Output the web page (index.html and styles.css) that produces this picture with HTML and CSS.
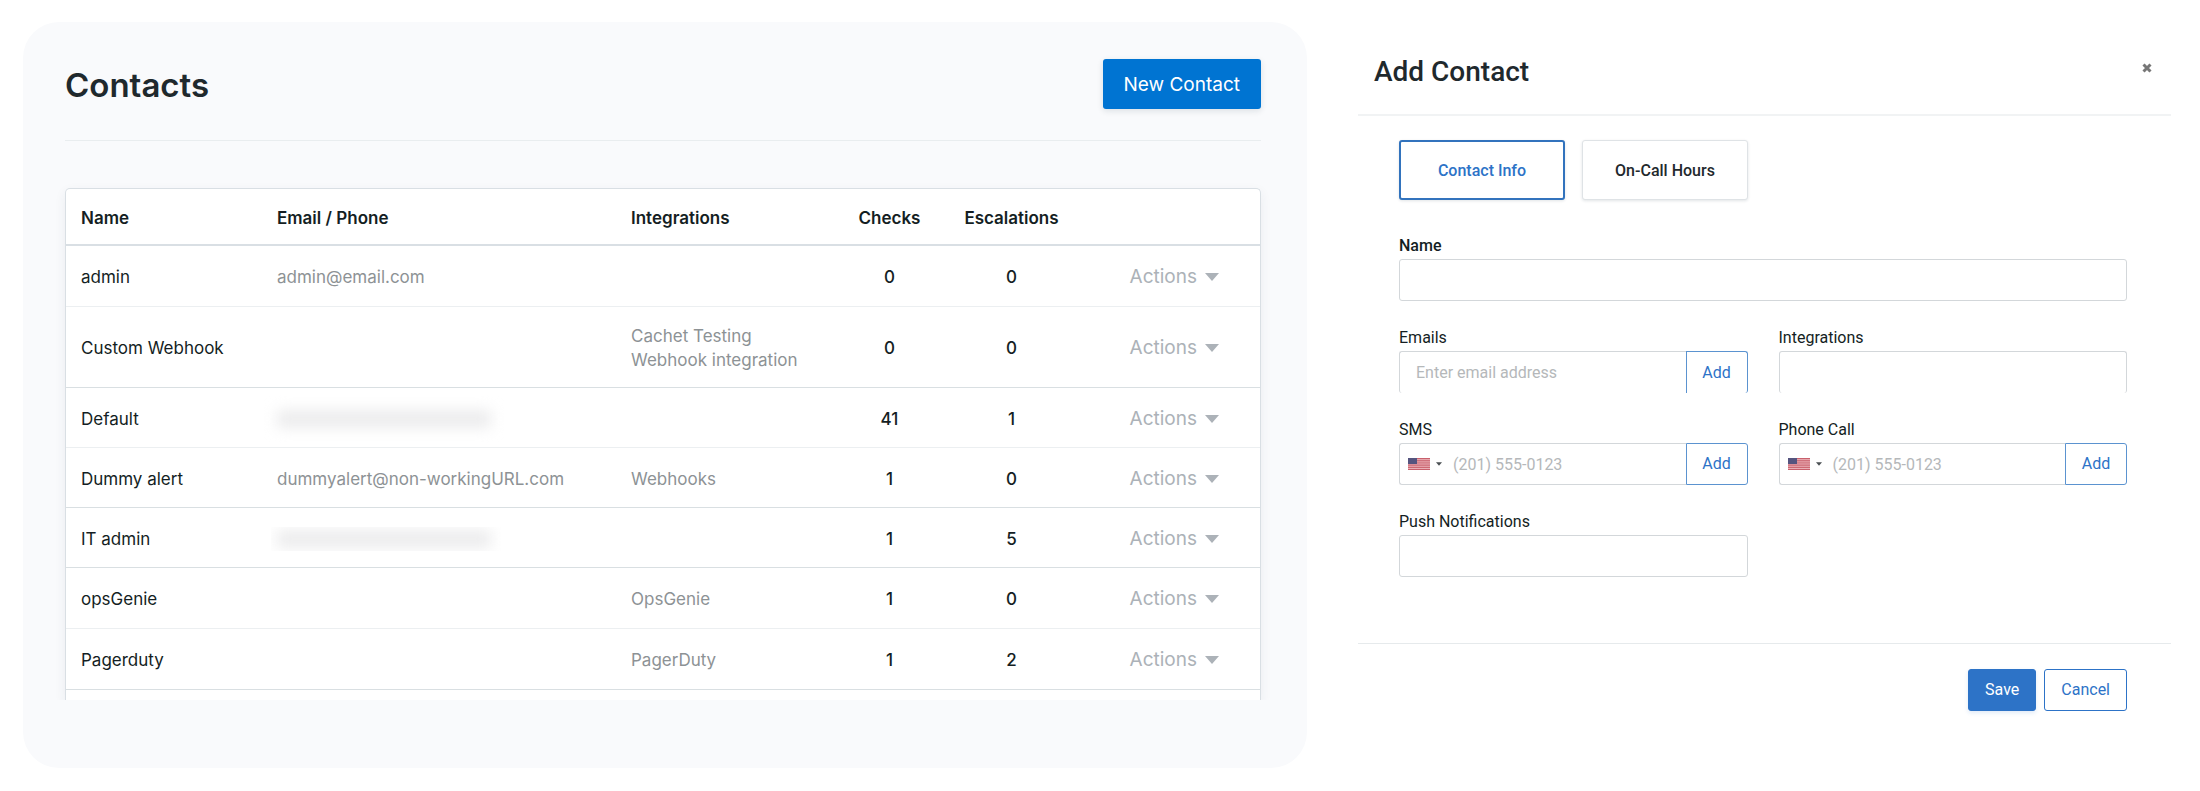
FILE: index.html
```html
<!DOCTYPE html>
<html lang="en">
<head>
    <meta charset="UTF-8">
    <meta name="viewport" content="width=device-width, initial-scale=1.0">
    <title>Contacts</title>
    <link rel="stylesheet" href="styles.css">
</head>
<body>
    <!-- Shared icons -->
    <svg class="sprite" width="0" height="0" aria-hidden="true">
        <symbol id="caret" viewBox="0 0 14 8"><path d="M0 0h14L7 8z" fill="currentColor"/></symbol>
        <symbol id="flag-us" viewBox="0 0 22 12" preserveAspectRatio="none">
            <rect width="22" height="12" fill="#eeb9bf"/>
            <path d="M0 .5h22M0 2.3h22M0 4.1h22M0 6h22M0 7.8h22M0 9.6h22M0 11.5h22" stroke="#c8606c"/>
            <rect width="9" height="6" fill="#55547f"/>
        </symbol>
    </svg>

    <div class="page">
        <section class="contacts">
            <header class="contacts-header">
                <h1>Contacts</h1>
                <button type="button" class="btn-new">New Contact</button>
            </header>

            <div class="table-clip">
                <table class="contacts-table">
                    <colgroup>
                        <col class="col-name">
                        <col class="col-email">
                        <col class="col-integrations">
                        <col class="col-checks">
                        <col class="col-escalations">
                        <col class="col-actions">
                    </colgroup>
                    <thead>
                        <tr>
                            <th>Name</th>
                            <th>Email / Phone</th>
                            <th>Integrations</th>
                            <th class="num">Checks</th>
                            <th class="num">Escalations</th>
                            <td></td>
                        </tr>
                    </thead>
                    <tbody>
                        <tr class="light">
                            <td>admin</td>
                            <td class="muted">admin@email.com</td>
                            <td class="muted"></td>
                            <td class="num">0</td>
                            <td class="num">0</td>
                            <td><button type="button" class="actions">Actions <svg><use href="#caret"/></svg></button></td>
                        </tr>
                        <tr class="double">
                            <td>Custom Webhook</td>
                            <td class="muted"></td>
                            <td class="muted">Cachet Testing<br>Webhook integration</td>
                            <td class="num">0</td>
                            <td class="num">0</td>
                            <td><button type="button" class="actions">Actions <svg><use href="#caret"/></svg></button></td>
                        </tr>
                        <tr class="light compact">
                            <td>Default</td>
                            <td class="muted"><div class="redacted"></div></td>
                            <td class="muted"></td>
                            <td class="num">41</td>
                            <td class="num">1</td>
                            <td><button type="button" class="actions">Actions <svg><use href="#caret"/></svg></button></td>
                        </tr>
                        <tr class="compact">
                            <td>Dummy alert</td>
                            <td class="muted">dummyalert@non-workingURL.com</td>
                            <td class="muted">Webhooks</td>
                            <td class="num">1</td>
                            <td class="num">0</td>
                            <td><button type="button" class="actions">Actions <svg><use href="#caret"/></svg></button></td>
                        </tr>
                        <tr class="compact">
                            <td>IT admin</td>
                            <td class="muted"><div class="redacted-clip"><div class="redacted"></div></div></td>
                            <td class="muted"></td>
                            <td class="num">1</td>
                            <td class="num">5</td>
                            <td><button type="button" class="actions">Actions <svg><use href="#caret"/></svg></button></td>
                        </tr>
                        <tr class="light">
                            <td>opsGenie</td>
                            <td class="muted"></td>
                            <td class="muted">OpsGenie</td>
                            <td class="num">1</td>
                            <td class="num">0</td>
                            <td><button type="button" class="actions">Actions <svg><use href="#caret"/></svg></button></td>
                        </tr>
                        <tr>
                            <td>Pagerduty</td>
                            <td class="muted"></td>
                            <td class="muted">PagerDuty</td>
                            <td class="num">1</td>
                            <td class="num">2</td>
                            <td><button type="button" class="actions">Actions <svg><use href="#caret"/></svg></button></td>
                        </tr>
                        <tr class="cut"><td colspan="6"></td></tr>
                    </tbody>
                </table>
            </div>
        </section>

        <form class="dialog">
            <header class="dialog-header">
                <h2>Add Contact</h2>
                <button type="button" class="close" aria-label="Close">
                    <svg viewBox="0 0 10 10"><path d="M1.5 1.5l7 7M8.5 1.5l-7 7" stroke="#777" stroke-width="3" fill="none"/></svg>
                </button>
            </header>

            <div class="dialog-body">
                <div class="tabs">
                    <button type="button" class="tab active">Contact Info</button>
                    <button type="button" class="tab">On-Call Hours</button>
                </div>

                <div class="fields">
                    <div class="field wide">
                        <label class="strong" for="name">Name</label>
                        <input type="text" id="name">
                    </div>
                    <div class="field open">
                        <label for="email">Emails</label>
                        <div class="group">
                            <input type="email" id="email" placeholder="Enter email address">
                            <button type="button" class="add">Add</button>
                        </div>
                    </div>
                    <div class="field open">
                        <label for="integrations">Integrations</label>
                        <input type="text" id="integrations">
                    </div>
                    <div class="field">
                        <label for="sms">SMS</label>
                        <div class="group phone">
                            <button type="button" class="country" aria-label="Country: United States">
                                <svg class="flag"><use href="#flag-us"/></svg>
                                <svg class="arrow"><use href="#caret"/></svg>
                            </button>
                            <input type="tel" id="sms" placeholder="(201) 555-0123">
                            <button type="button" class="add">Add</button>
                        </div>
                    </div>
                    <div class="field">
                        <label for="call">Phone Call</label>
                        <div class="group phone">
                            <button type="button" class="country" aria-label="Country: United States">
                                <svg class="flag"><use href="#flag-us"/></svg>
                                <svg class="arrow"><use href="#caret"/></svg>
                            </button>
                            <input type="tel" id="call" placeholder="(201) 555-0123">
                            <button type="button" class="add">Add</button>
                        </div>
                    </div>
                    <div class="field">
                        <label for="push">Push Notifications</label>
                        <input type="text" id="push">
                    </div>
                </div>
            </div>

            <footer class="dialog-footer">
                <button type="submit" class="save">Save</button>
                <button type="button" class="cancel">Cancel</button>
            </footer>
        </form>
    </div>
</body>
</html>
```
FILE: styles.css
```css
* {
    box-sizing: border-box;
}
body {
    margin: 0;
    background: #fff;
    color: #141e23;
    font-family: Inter, "Open Sans", sans-serif;
}
button,
input {
    font: inherit;
    margin: 0;
}
button {
    cursor: pointer;
}
h1,
h2 {
    margin: 0;
    color: #1f292d;
}
.sprite {
    position: absolute;
}
.page {
    display: grid;
    grid-template-columns: 1284fr 813fr;
    gap: 51px;
    align-items: start;
    padding: 22px 29px 22px 23px;
}

/* Contacts list */
.contacts {
    background: #f9fafc;
    border-radius: 36px;
    padding: 37px 46px 68px 42px;
}
.contacts-header {
    display: flex;
    align-items: center;
    justify-content: space-between;
    padding-bottom: 31px;
    border-bottom: 1px solid #e9edef;
}
h1 {
    padding-top: 2px;
    font-size: 33px;
    font-weight: 600;
    line-height: 48px;
}
.btn-new {
    height: 50px;
    padding: 0 21px;
    border: 0;
    border-radius: 3px;
    background: #0074d2;
    color: #fff;
    font-size: 19px;
    box-shadow: 0 2px 6px rgba(20, 40, 60, 0.12);
}
/* cuts the table shadow off at the bottom edge */
.table-clip {
    overflow: hidden;
    margin: 35px -10px 0;
    padding: 12px 10px 0;
}
.contacts-table {
    width: 100%;
    table-layout: fixed;
    border-collapse: separate;
    border-spacing: 0;
    border: 1px solid #d9dfe4;
    border-bottom: 0;
    border-radius: 5px 5px 0 0;
    background: #fff;
    box-shadow: 0 4px 12px rgba(40, 60, 80, 0.07);
    font-size: 17px;
    line-height: 24px;
}
.col-name { width: 196px; }
.col-integrations { width: 213px; }
.col-checks { width: 121px; }
.col-escalations { width: 123px; }
.col-actions { width: 187px; }
.contacts-table th,
.contacts-table td {
    height: 61px;
    padding: 2px 0 0 15px;
    text-align: left;
    border-bottom: 1px solid #d9dfe2;
}
.contacts-table thead th,
.contacts-table thead td {
    height: 57px;
    border-bottom: 2px solid #d9dfe4;
    font-weight: 600;
}
.contacts-table .light td {
    border-bottom-color: #eceff1;
}
.contacts-table .compact td {
    height: 60px;
}
.contacts-table .double td {
    height: 81px;
}
.contacts-table .cut td {
    height: 10px;
    border-bottom: 0;
}
.contacts-table .muted {
    color: #8d9295;
}
.contacts-table th.num,
.contacts-table td.num {
    padding: 2px 0 0;
    text-align: center;
}
.contacts-table td.num {
    font-weight: 500;
}
.actions {
    display: flex;
    align-items: center;
    gap: 8px;
    margin-left: auto;
    margin-right: 41px;
    padding: 0;
    border: 0;
    background: none;
    color: #acb2b8;
    font-size: 19px;
}
.actions svg {
    width: 14px;
    height: 8px;
}
.redacted {
    width: 214px;
    height: 18px;
    background: #ececed;
    filter: blur(7px);
}
.redacted-clip {
    overflow: hidden;
    margin-left: -6px;
    padding: 3px 6px;
    width: 230px;
}

/* Add contact dialog */
.dialog {
    font-family: Roboto, sans-serif;
    font-size: 16px;
    line-height: 24px;
}
.dialog-header {
    display: flex;
    justify-content: space-between;
    padding: 34px 16px 26px;
    border-bottom: 2px solid #f1f3f4;
}
h2 {
    font-size: 28px;
    font-weight: 500;
    line-height: 32px;
}
.close {
    align-self: flex-start;
    width: 16px;
    height: 24px;
    padding: 0;
    border: 0;
    background: none;
}
.close svg {
    width: 10px;
    height: 10px;
}
.dialog-body {
    padding: 24px 44px 66px 41px;
}
.tabs {
    display: flex;
    gap: 17px;
}
.tab {
    width: 166px;
    height: 60px;
    padding-top: 2px;
    border: 1px solid #dfe3e6;
    border-radius: 3px;
    background: #fff;
    color: #1f292d;
    font-weight: 500;
    box-shadow: 0 1px 3px rgba(20, 40, 60, 0.12);
}
.tab.active {
    border: 2px solid #3273bd;
    color: #2d73c7;
}
.fields {
    display: grid;
    grid-template-columns: 1fr 1fr;
    gap: 25px 31px;
    padding-top: 34px;
}
.field {
    display: flex;
    flex-direction: column;
    gap: 1px;
}
.wide {
    grid-column: 1 / -1;
}
.strong {
    font-weight: 500;
}
.field input {
    width: 100%;
    height: 42px;
    padding: 0 16px;
    border: 1px solid #d3d7da;
    border-radius: 3px;
    background: #fff;
    outline: 0;
}
.field input::placeholder {
    color: #b5b8ba;
    opacity: 1;
}
.group {
    display: flex;
}
.field .group input {
    flex: 1;
    min-width: 0;
    border-right: 0;
    border-radius: 3px 0 0 3px;
}
.country {
    display: flex;
    align-items: center;
    gap: 6px;
    padding: 0 11px 0 8px;
    border: 1px solid #d3d7da;
    border-right: 0;
    border-radius: 3px 0 0 3px;
    background: #fff;
    color: #4a4f52;
}
.flag {
    width: 22px;
    height: 12px;
}
.arrow {
    width: 6px;
    height: 4px;
}
.field .phone input {
    padding-left: 0;
    border-left: 0;
    border-radius: 0;
}
.add {
    width: 62px;
    height: 42px;
    border: 1px solid #5b93d0;
    border-radius: 0 3px 3px 0;
    background: #fff;
    color: #2d73c7;
}
.open input,
.open .add {
    border-bottom: 0;
}
.dialog-footer {
    display: flex;
    justify-content: flex-end;
    gap: 8px;
    padding: 25px 44px 0;
    border-top: 1px solid #e6eaec;
}
.save,
.cancel {
    height: 42px;
    padding: 0 16px;
    border: 1px solid #2d73c7;
    border-radius: 3px;
}
.save {
    background: #2d73c7;
    color: #fff;
    box-shadow: 0 2px 4px rgba(45, 115, 199, 0.15);
}
.cancel {
    background: #fff;
    color: #2d73c7;
}
```
